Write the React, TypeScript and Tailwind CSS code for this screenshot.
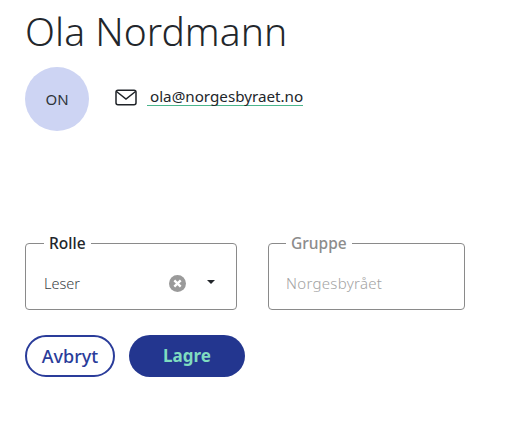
const FONT = "font-['Noto_Sans','Lato',sans-serif]";

function MailIcon() {
  return (
    <svg width="22" height="17" viewBox="0 0 22 17" fill="none" stroke="#1f2328" strokeWidth="1.5">
      <rect x="1" y="1.2" width="20" height="14.6" rx="2" />
      <path d="M1.5 2.5 L11 10 L20.5 2.5" />
    </svg>
  );
}

function ClearIcon() {
  return (
    <svg width="17" height="17" viewBox="0 0 16 16">
      <circle cx="8" cy="8" r="8" fill="#9a9a9a" />
      <path d="M5 5 L11 11 M11 5 L5 11" stroke="#fff" strokeWidth="2.2" />
    </svg>
  );
}

export default function App() {
  return (
    <div className={`${FONT} h-[425px] w-[525px] overflow-hidden bg-white pl-[25px] text-[#22262b]`}>
      <h1 className="pt-[7px] text-[39px] leading-[48px] font-light tracking-[0.05px]">Ola Nordmann</h1>

      <div className="mt-[12px] flex items-center">
        <div className="flex h-16 w-16 items-center justify-center rounded-full bg-[#cdd4f3] text-[15px] text-[#2f343a]">
          ON
        </div>
        <div className="mb-[4px] ml-[26px] flex items-center gap-[10px]">
          <MailIcon />
          <a className="border-b border-[#4bb58c] pl-[3px] text-[15.2px] leading-[17px]">ola@norgesbyraet.no</a>
        </div>
      </div>

      <div className="mt-[102px] flex gap-[31px]">
        <fieldset className="h-[77px] w-[212px] rounded border border-[#8a8a8a] pl-[18px] pr-[21px]">
          <legend className="px-[5px] text-[15.5px] leading-[20px] font-medium">Rolle</legend>
          <div className="mt-[20px] flex items-center text-[14.5px] leading-[20px] font-light text-[#3a3e43]">
            <span className="flex-1">Leser</span>
            <ClearIcon />
            <span className="mb-[2px] ml-[21px] h-0 w-0 border-x-[4px] border-t-[4px] border-x-transparent border-t-[#22262b]" />
          </div>
        </fieldset>

        <fieldset className="h-[77px] w-[197px] rounded border border-[#8a8a8a] pl-[17px]">
          <legend className="px-[5px] text-[15.5px] leading-[20px] font-medium text-[#8c8c8c]">Gruppe</legend>
          <div className="mt-[20px] text-[15px] leading-[20px] font-light tracking-[0.3px] text-[#a3a3a3]">
            Norgesbyrået
          </div>
        </fieldset>
      </div>

      <div className="mt-[25px] flex gap-[14px]">
        <button className="h-[42px] w-[90px] rounded-full border-2 border-[#2a3c9a] text-[18px] font-medium text-[#2a3c9a]">
          Avbryt
        </button>
        <button className="h-[42px] w-[116px] rounded-full bg-[#23368f] text-[17px] font-bold text-[#7fdcc0]">
          Lagre
        </button>
      </div>
    </div>
  );
}
